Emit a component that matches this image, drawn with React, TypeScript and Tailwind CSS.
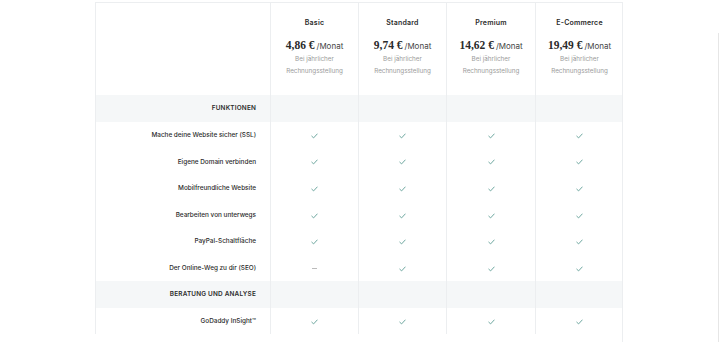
const plans = [
  { name: "Basic", price: "4,86 €" },
  { name: "Standard", price: "9,74 €" },
  { name: "Premium", price: "14,62 €" },
  { name: "E-Commerce", price: "19,49 €" },
];

type Row =
  | { kind: "section"; label: string }
  | { kind: "feature"; label: string; values: boolean[] };

const rows: Row[] = [
  { kind: "section", label: "FUNKTIONEN" },
  { kind: "feature", label: "Mache deine Website sicher (SSL)", values: [true, true, true, true] },
  { kind: "feature", label: "Eigene Domain verbinden", values: [true, true, true, true] },
  { kind: "feature", label: "Mobilfreundliche Website", values: [true, true, true, true] },
  { kind: "feature", label: "Bearbeiten von unterwegs", values: [true, true, true, true] },
  { kind: "feature", label: "PayPal-Schaltfläche", values: [true, true, true, true] },
  { kind: "feature", label: "Der Online-Weg zu dir (SEO)", values: [false, true, true, true] },
  { kind: "section", label: "BERATUNG UND ANALYSE" },
  { kind: "feature", label: "GoDaddy InSight™", values: [true, true, true, true] },
];

const grid = "grid grid-cols-[175px_88px_88px_89px_88px]";
const cell = "border-l border-[#eceef0]";

function Check() {
  return (
    <svg width="7" height="6" viewBox="0 0 7 6" fill="none">
      <path d="M0.8 3.2 L2.6 4.9 L6.2 1" stroke="#5f9e95" strokeWidth="0.9" strokeLinecap="round" strokeLinejoin="round" />
    </svg>
  );
}

export default function App() {
  return (
    <div className="flex h-[342px] w-[720px] overflow-hidden bg-white font-['Inter',sans-serif] text-[#2b2b2b]">
      <div className="w-[95px] shrink-0" />
      <div className="w-[528px] shrink-0 border-r border-t border-[#eceef0] mt-[2px]">
        <div className={`${grid} h-[92px]`}>
          <div className={cell} />
          {plans.map((p) => (
            <div key={p.name} className={`${cell} flex flex-col items-center pt-[15px]`}>
              <div className="text-[7px] font-semibold leading-[10px] tracking-[0.2px]">{p.name}</div>
              <div className="mt-[11px] flex items-baseline leading-[12px]">
                <span className="font-['Liberation_Serif',serif] text-[11.5px] font-bold">{p.price}</span>
                <span className="ml-[2px] text-[8px] text-[#444]">/Monat</span>
              </div>
              <div className="mt-[1px] text-center text-[6.3px] leading-[12px] text-[#9a9a9a]">
                Bei jährlicher
                <br />
                Rechnungsstellung
              </div>
            </div>
          ))}
        </div>
        {rows.map((r) =>
          r.kind === "section" ? (
            <div key={r.label} className={`${grid} h-[26.6px] bg-[#f5f7f8]`}>
              <div className={`${cell} flex items-center justify-end pr-[14px] pt-[1px] text-[6.4px] font-semibold tracking-[0.2px]`}>
                {r.label}
              </div>
              {plans.map((p) => (
                <div key={p.name} className={cell} />
              ))}
            </div>
          ) : (
            <div key={r.label} className={`${grid} h-[26.6px]`}>
              <div className={`${cell} flex items-center justify-end pr-[14px] pt-[2px] text-[6.4px] font-medium`}>
                {r.label}
              </div>
              {r.values.map((v, i) => (
                <div key={i} className={`${cell} flex items-center justify-center pt-[2px]`}>
                  {v ? <Check /> : <div className="h-px w-[5px] bg-[#bbb]" />}
                </div>
              ))}
            </div>
          )
        )}
      </div>
      <div className="flex-1" />
      <div className="mt-[33px] w-[2px] border-l border-[#e6e6e6]" />
    </div>
  );
}
